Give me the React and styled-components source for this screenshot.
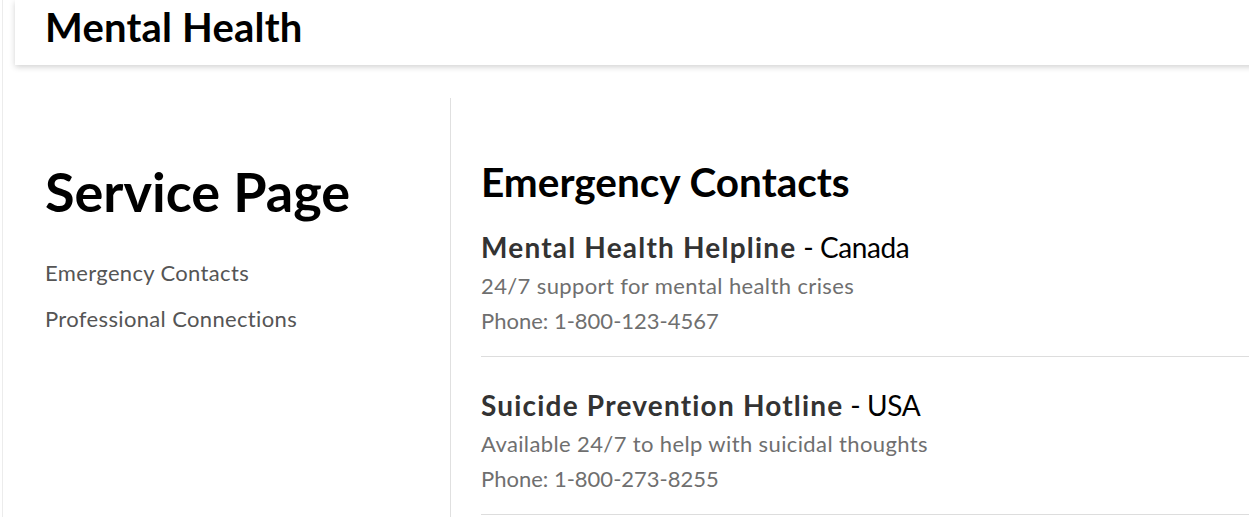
import React from "react";
import styled, { createGlobalStyle } from "styled-components";

const Global = createGlobalStyle`
  html, body { margin: 0; padding: 0; background: #fff; overflow: hidden; }
  body { font-family: Lato, "Open Sans", sans-serif; color: #000; }
  * { box-sizing: border-box; }
`;

const Page = styled.div`
  margin-left: 2px;
  border-left: 1px solid #ececec;
  padding-left: 12px;
  min-height: 517px;
  width: 1300px;
`;

const Header = styled.header`
  background: #fff;
  padding: 3px 31px 14px 30px;
  box-shadow: 0 2px 6px rgba(0, 0, 0, 0.18);
`;

const HeaderTitle = styled.h1`
  margin: 0;
  font-size: 40px;
  line-height: 48px;
  font-weight: 700;
  letter-spacing: 0.2px;
`;

const Body = styled.div`
  display: flex;
  margin-top: 33px;
  min-height: 430px;
`;

const Sidebar = styled.aside`
  width: 436px;
  flex: none;
  border-right: 1px solid #e0e0e0;
  padding: 60px 31px 0 30px;
`;

const SideTitle = styled.h1`
  margin: 0;
  font-size: 54px;
  line-height: 68px;
  font-weight: 700;
`;

const NavList = styled.nav`
  display: flex;
  flex-direction: column;
  margin-top: 24px;
`;

const NavLink = styled.a`
  font-size: 22px;
  line-height: 46px;
  color: #555;
  text-decoration: none;
  letter-spacing: 0.35px;
`;

const Main = styled.main`
  flex: 1;
  padding: 66px 0 0 30px;
`;

const SectionTitle = styled.h2`
  margin: 0;
  font-size: 40.5px;
  line-height: 35px;
  font-weight: 700;
`;

const Item = styled.div`
  padding: 31px 0 18px;
  border-bottom: 1px solid #ddd;
`;

const ItemTitle = styled.div`
  font-size: 28px;
  line-height: 34px;
  color: #000;
  margin-bottom: 4px;
`;

const Name = styled.strong`
  color: #333;
  font-weight: 700;
  letter-spacing: 1.2px;
`;

const Country = styled.span`
  letter-spacing: -0.4px;
`;

const Line = styled.p`
  margin: 0;
  font-size: 22px;
  line-height: 35px;
  color: #6f6f6f;
  letter-spacing: ${(p) => (p.$spaced ? "0.38px" : "0")};
`;

const contacts = [
  {
    name: "Mental Health Helpline",
    country: "Canada",
    desc: "24/7 support for mental health crises",
    phone: "1-800-123-4567",
  },
  {
    name: "Suicide Prevention Hotline",
    country: "USA",
    desc: "Available 24/7 to help with suicidal thoughts",
    phone: "1-800-273-8255",
  },
];

export default function App() {
  return (
    <>
      <Global />
      <Page>
        <Header>
          <HeaderTitle>Mental Health</HeaderTitle>
        </Header>
        <Body>
          <Sidebar>
            <SideTitle>Service Page</SideTitle>
            <NavList>
              <NavLink href="#emergency">Emergency Contacts</NavLink>
              <NavLink href="#professional">Professional Connections</NavLink>
            </NavList>
          </Sidebar>
          <Main>
            <SectionTitle>Emergency Contacts</SectionTitle>
            {contacts.map((c) => (
              <Item key={c.name}>
                <ItemTitle>
                  <Name>{c.name}</Name>
                  <Country> - {c.country}</Country>
                </ItemTitle>
                <Line $spaced>{c.desc}</Line>
                <Line>Phone: {c.phone}</Line>
              </Item>
            ))}
          </Main>
        </Body>
      </Page>
    </>
  );
}
